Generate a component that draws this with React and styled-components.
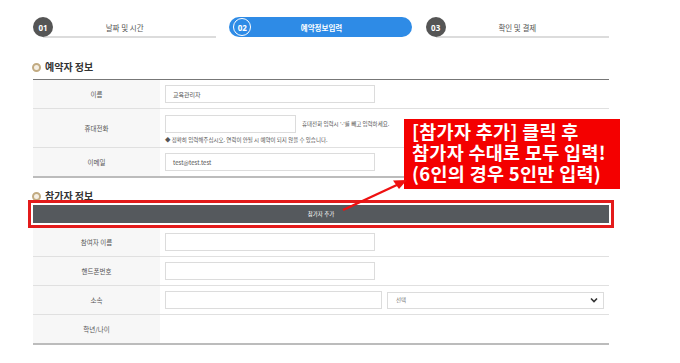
import React from "react";
import styled, { createGlobalStyle, css } from "styled-components";

const GlobalStyle = createGlobalStyle`
  html, body {
    margin: 0;
    padding: 0;
    background: #fff;
  }
  body {
    font-family: "Noto Sans CJK KR", "Noto Sans", sans-serif;
    color: #444;
  }
`;

const steps = [
  { no: "01", label: "날짜 및 시간" },
  { no: "02", label: "예약정보입력", active: true },
  { no: "03", label: "확인 및 결제" },
];

const booker = [
  { label: "이름", value: "교육관리자" },
  { label: "휴대전화", phone: true },
  { label: "이메일", value: "test@test.test" },
];

export default function App() {
  return (
    <>
      <GlobalStyle />
      <Page>
        <Steps>
          {steps.map((s) => (
            <Step key={s.no} $active={s.active}>
              <StepNo $active={s.active}>{s.no}</StepNo>
              <StepLabel $active={s.active}>{s.label}</StepLabel>
            </Step>
          ))}
        </Steps>

        <SectionTitle>예약자 정보</SectionTitle>
        <Table>
          {booker.map((r) => (
            <Row key={r.label} $tall={r.phone}>
              <Label>{r.label}</Label>
              <Cell>
                {r.phone ? (
                  <PhoneBox>
                    <Line>
                      <Input $w={131} />
                      <Hint>휴대전화 입력시 '-'를 빼고 입력하세요.</Hint>
                    </Line>
                    <Note>◆ 정확히 입력해주십시오. 연락이 안될 시 예약이 되지 않을 수 있습니다.</Note>
                  </PhoneBox>
                ) : (
                  <Input $w={210}>{r.value}</Input>
                )}
              </Cell>
            </Row>
          ))}
        </Table>

        <SectionTitle $second>참가자 정보</SectionTitle>
        <AddBar>참가자 추가</AddBar>
        <Table $noTop>
          <Row>
            <Label>참여자 이름</Label>
            <Cell>
              <Input $w={210} />
            </Cell>
          </Row>
          <Row>
            <Label>핸드폰번호</Label>
            <Cell>
              <Input $w={210} />
            </Cell>
          </Row>
          <Row>
            <Label>소속</Label>
            <Cell>
              <Input $w={217} />
              <Select>
                <span>선택</span>
                <svg width="8" height="6" viewBox="0 0 8 6">
                  <path d="M1 1.5 L4 4.5 L7 1.5" fill="none" stroke="#333" strokeWidth="1.6" />
                </svg>
              </Select>
            </Cell>
          </Row>
          <Row $last>
            <Label>학년/나이</Label>
            <Cell />
          </Row>
        </Table>

        <Callout>
          [참가자 추가] 클릭 후
          <br />
          참가자 수대로 모두 입력!
          <br />
          (6인의 경우 5인만 입력)
        </Callout>
        <Arrow width="70" height="36" viewBox="0 0 70 36">
          <line x1="2" y1="33" x2="58" y2="7" stroke="#ee1111" strokeWidth="2.4" />
          <path d="M66 3 L52 3.5 L58 12 Z" fill="#ee1111" />
        </Arrow>
      </Page>
    </>
  );
}

const Page = styled.div`
  position: relative;
  width: 576px;
  padding: 17px 0 0 33px;
`;

const Steps = styled.div`
  display: grid;
  grid-template-columns: repeat(3, 1fr);
  gap: 13px;
`;

const Step = styled.div`
  position: relative;
  display: flex;
  align-items: center;
  height: 20px;
  ${({ $active }) =>
    $active
      ? css`
          background: #2e8be6;
          border-radius: 10px;
          padding-left: 4px;
          margin-right: 1px;
        `
      : css`
          &::after {
            content: "";
            position: absolute;
            left: 10px;
            right: 0;
            bottom: -1px;
            height: 2px;
            background: #dcdcdc;
          }
        `}
`;

const StepNo = styled.div`
  position: relative;
  z-index: 1;
  flex: none;
  width: ${({ $active }) => ($active ? "16px" : "20px")};
  height: ${({ $active }) => ($active ? "16px" : "20px")};
  border-radius: 50%;
  background: ${({ $active }) => ($active ? "#2e8be6" : "#555")};
  border: ${({ $active }) => ($active ? "1px solid #fff" : "none")};
  color: #fff;
  font-family: "Noto Sans", sans-serif;
  font-weight: 700;
  font-size: 8px;
  display: flex;
  align-items: center;
  justify-content: center;
`;

const StepLabel = styled.div`
  flex: 1;
  text-align: center;
  font-size: 7.5px;
  color: ${({ $active }) => ($active ? "#fff" : "#555")};
  font-weight: ${({ $active }) => ($active ? 700 : 400)};
  padding-right: 20px;
`;

const SectionTitle = styled.div`
  display: flex;
  align-items: center;
  gap: 4px;
  margin: ${({ $second }) => ($second ? "12px 0 3px" : "24px 0 6px")};
  margin-left: -1px;
  font-size: 10px;
  font-weight: 700;
  color: #333;
  line-height: 12px;

  &::before {
    content: "";
    width: 5px;
    height: 5px;
    border-radius: 50%;
    border: 2px solid #c2ab82;
    background: #f5efe4;
  }
`;

const Table = styled.div`
  border-top: ${({ $noTop }) => ($noTop ? "none" : "1px solid #777")};
  border-bottom: 2px solid #bcbcbc;
`;

const Row = styled.div`
  display: grid;
  grid-template-columns: 127px 1fr;
  height: ${({ $tall }) => ($tall ? "38px" : "28px")};
  border-bottom: ${({ $last }) => ($last ? "none" : "1px solid #e0e0e0")};
  &:last-child {
    border-bottom: none;
  }
`;

const Label = styled.div`
  background: #f7f7f7;
  display: flex;
  align-items: center;
  justify-content: center;
  font-size: 6.5px;
  color: #555;
`;

const Cell = styled.div`
  display: flex;
  align-items: center;
  gap: 5px;
  padding-left: 5px;
`;

const Input = styled.div`
  box-sizing: border-box;
  width: ${({ $w }) => $w}px;
  height: 18px;
  border: 1px solid #dcdcdc;
  background: #fff;
  display: flex;
  align-items: center;
  padding-left: 7px;
  font-size: 6px;
  color: #555;
`;

const PhoneBox = styled.div`
  display: flex;
  flex-direction: column;
  gap: 3px;
  padding-top: 2px;
`;

const Line = styled.div`
  display: flex;
  align-items: center;
  gap: 6px;
`;

const Hint = styled.span`
  font-size: 5.5px;
  color: #555;
`;

const Note = styled.span`
  font-size: 5.5px;
  color: #555;
`;

const Select = styled.div`
  box-sizing: border-box;
  width: 217px;
  height: 17px;
  border: 1px solid #dcdcdc;
  display: flex;
  align-items: center;
  justify-content: space-between;
  padding: 0 5px 0 8px;
  font-size: 5.5px;
  color: #777;
`;

const AddBar = styled.div`
  height: 18px;
  background: #55595d;
  color: #fff;
  font-size: 5.5px;
  display: flex;
  align-items: center;
  justify-content: center;
  outline: 3px solid #e31b1b;
  outline-offset: 2px;
  margin-bottom: 5px;
`;

const Callout = styled.div`
  position: absolute;
  left: 404px;
  top: 119px;
  width: 216px;
  height: 70px;
  box-sizing: border-box;
  padding: 2px 0 0 8px;
  background: #f40000;
  color: #fff;
  font-weight: 700;
  font-size: 18.5px;
  line-height: 21px;
  letter-spacing: 0.3px;
  white-space: nowrap;
`;

const Arrow = styled.svg`
  position: absolute;
  left: 341px;
  top: 177px;
`;
